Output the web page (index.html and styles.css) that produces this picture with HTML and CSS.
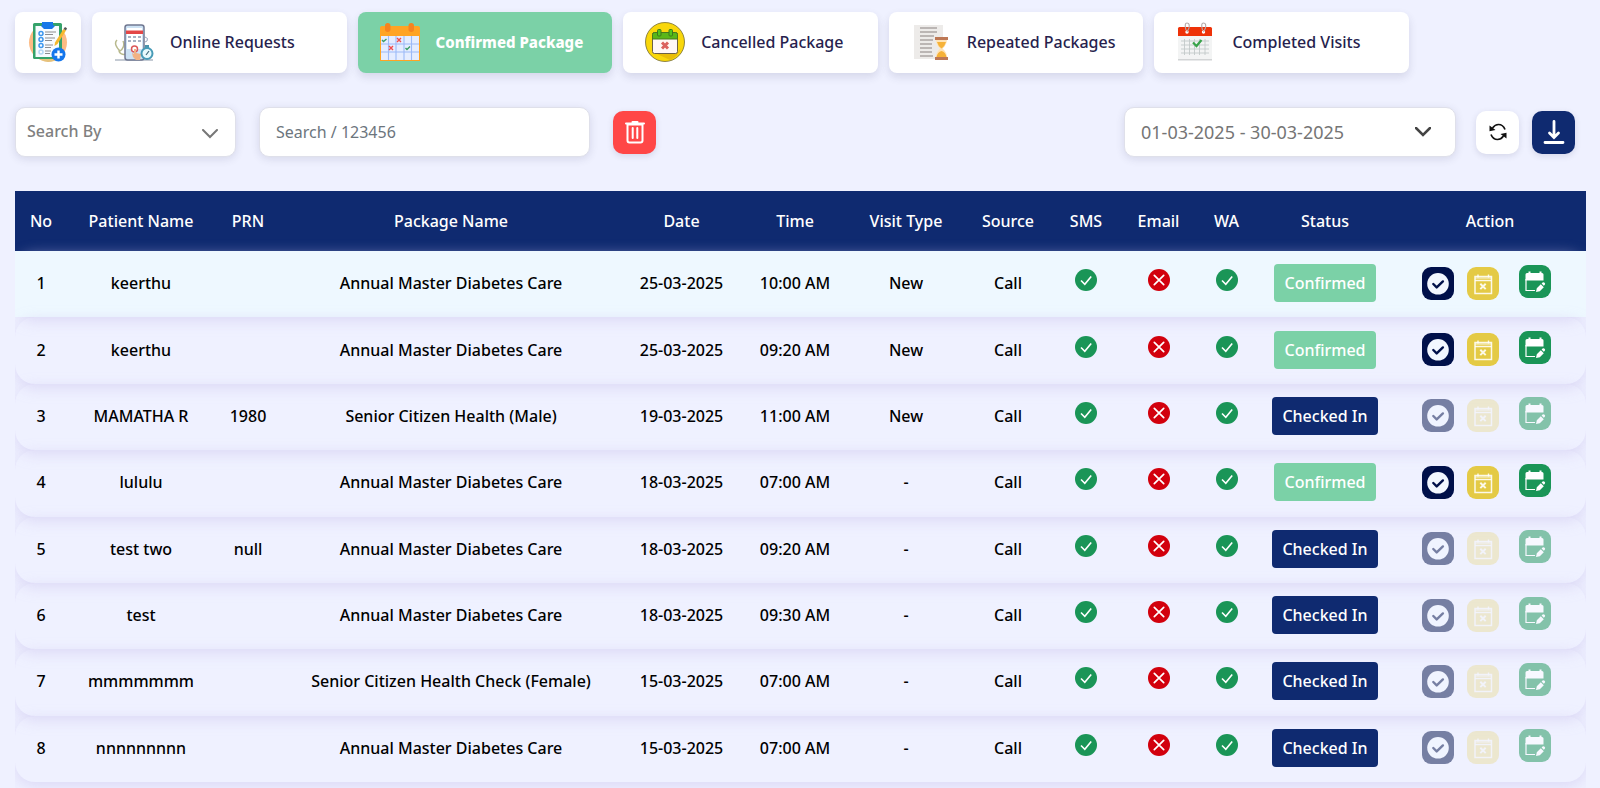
FILE: index.html
```html
<!DOCTYPE html>
<html lang="en">
<head>
<meta charset="utf-8">
<title>Confirmed Package</title>
<link rel="stylesheet" href="styles.css">
</head>
<body>
<svg class="sprite" aria-hidden="true">
  <symbol id="ok" viewBox="0 0 22 22"><circle cx="11" cy="11" r="11" fill="#1a9557"/><path d="M6 11.5l3.8 3.8 6.4-7.8" fill="none" stroke="#fff" stroke-width="1.6"/></symbol>
  <symbol id="no" viewBox="0 0 22 22"><circle cx="11" cy="11" r="11" fill="#d2000d"/><path d="M6.3 6.3l9.4 9.4M15.7 6.3l-9.4 9.4" fill="none" stroke="#fff" stroke-width="1.7" stroke-linecap="round"/></symbol>
  <symbol id="check" viewBox="0 0 32 33"><circle cx="16" cy="16.800" r="10.800" fill="#f2f7ff"/><path d="M11.300 17l3.400 3.400 6.200-6" fill="none" stroke="#00104a" stroke-width="2.400" stroke-linecap="round" stroke-linejoin="round"/></symbol>
  <symbol id="cancel" viewBox="0 0 32 33"><g fill="none" stroke="#fff" stroke-opacity=".88"><path d="M8 9.500h16.500v17H8z" stroke-width="1.500"/><path d="M8 11h16.500" stroke-width="2" stroke-opacity=".45"/><path d="M8 13.500h16.500M11 7.500v3M21.500 7.500v3" stroke-width="1.400"/><path d="M13.300 16.700l5.400 5.400M18.700 16.700l-5.400 5.400" stroke-width="2"/></g></symbol>
  <symbol id="edit" viewBox="0 0 32 33"><path d="M6.500 9.500q0-1.500 1.500-1.500h1.500V6.500h2V8h9V6.500h2V8H23q1.500 0 1.500 1.500v6h-18z" fill="#fff"/><path d="M7 14v11.500h9" fill="none" stroke="#fff" stroke-width="1.200"/><path d="M17 27l.8-3.800 4-4 3 3-4 4zM22.600 18.500l1-1q1-.7 2 .2 1 1 .2 2l-1 1z" fill="#fff"/></symbol>
</svg>
<main class="page">
  <nav class="tabs" aria-label="Package lists">
    <button class="tab tab-icon" type="button" aria-label="New request">
      <svg class="tab-art" viewBox="0 0 40 40"><circle cx="20" cy="20.500" r="19" fill="#fdbb84"/><path d="M7 33h22l4 2q-6 5-13 5T7 33z" fill="#e6c27c"/><rect x="5" y="1" width="29" height="36" rx="1.500" fill="#35a26a"/><path d="M7.500 4h23.500v31H7.500z" fill="#f7fbff"/><path d="M14 0h11v3l2 1-3 3h-8l-3-3 1-1z" fill="#1877e8"/><g fill="none" stroke="#3d97ee" stroke-width="1.500"><circle cx="13" cy="11.500" r="2"/><circle cx="13" cy="17.500" r="2"/><circle cx="13" cy="23.500" r="2"/><circle cx="13" cy="30" r="2" stroke="#b5d7f5"/></g><path d="M17 10h11M17 12.500h8M17 16h10M17 18.500h7M17 23h8M17 25.500h6M17 29h6M17 31.500h5" stroke="#8d8d90" stroke-width="1.100"/><path d="M27 20.500L35.500 7l2.500 1.500-8.500 13.500-3 2z" fill="#f5b92d"/><path d="M35.500 7l1.500-2 2 1.300-1 2.200z" fill="#555"/><circle cx="30.500" cy="32.500" r="7" fill="#1476ec"/><path d="M30.500 28.500v8M26.500 32.500h8" stroke="#fff" stroke-width="2.400"/></svg>
    </button>
    <button class="tab" type="button">
      <svg class="tab-art" viewBox="0 0 40 40"><path d="M1 38h38" stroke="#8996a7" stroke-width="1"/><path d="M3 18c-3 3-1 7 3 11 3-2 5-6 3-10M5 28c0 4 4 5 7 4" fill="none" stroke="#b8b98d" stroke-width="1.500"/><rect x="11" y="3" width="19" height="35" rx="2.500" fill="#cde2f4" stroke="#707891" stroke-width="1.500"/><path d="M13 6h15v21H13z" fill="#fff"/><path d="M12 8.500h17V12H12z" fill="#e34747"/><path d="M14 15h3M19 15h3M24 15h3M14 19h3M19 19h3M24 19h3" stroke="#a6b2c3" stroke-width="2"/><path d="M31 15q4 1 2 4l-2 1" fill="none" stroke="#99a7bd"/><circle cx="20.500" cy="27" r="3" fill="#fff" stroke="#db5858" stroke-width="1.500"/><path d="M20 27v5l-2-1 1 4 3 3h4l1-6-5-1v-4z" fill="#f1b283"/><path d="M31 23h4v3h-4z" fill="#4a93ab"/><circle cx="33" cy="31.500" r="5.500" fill="#e9fafd" stroke="#489bb7" stroke-width="2"/><path d="M32 33l3-4" stroke="#426b7c" stroke-width="1.200"/></svg>
      <span>Online Requests</span>
    </button>
    <button class="tab tab-active" type="button" aria-current="page">
      <svg class="tab-art" viewBox="0 0 40 40"><path d="M0 6q0-2 2-2h36q2 0 2 2v33H0z" fill="#ffa424"/><path d="M1 14h38v24H1z" fill="#e5edff"/><path d="M8.500 14v24M16 14v24M24 14v24M31.500 14v24M1 22h38M1 30h38" stroke="#9cbaf8" stroke-width="1.100"/><rect x="5" y="1" width="5.500" height="9" rx="2.700" fill="#f6841f"/><rect x="28.500" y="1" width="5.500" height="9" rx="2.700" fill="#f6841f"/><path d="M2 18l1.500 1.500L6.500 17M25.500 26l1.500 1.500 3-3" fill="none" stroke="#399c65" stroke-width="1.400"/><path d="M17 16l4 4M21 16l-4 4M9 24l4 4M13 24l-4 4" stroke="#f04d4d" stroke-width="1.400"/></svg>
      <span>Confirmed Package</span>
    </button>
    <button class="tab" type="button">
      <svg class="tab-art" viewBox="0 0 40 40"><circle cx="20" cy="20" r="19.500" fill="#f9d70b" stroke="#736b30" stroke-width=".8"/><path d="M10 31h22l4-5q-3 9-11 12z" fill="#e9bd08"/><rect x="7.500" y="10.500" width="25" height="21" rx="2" fill="#fff7f5" stroke="#6d6145"/><path d="M7.500 17v-4.500q0-2 2-2h21q2 0 2 2V17z" fill="#5ab719" stroke="#48791a"/><rect x="12.500" y="7.500" width="3.500" height="6.500" rx="1" fill="#55c51b" stroke="#3e781d"/><rect x="24" y="7.500" width="3.500" height="6.500" rx="1" fill="#55c51b" stroke="#3e781d"/><path d="M17 20.500l6 6M23 20.500l-6 6" stroke="#db625f" stroke-width="3"/></svg>
      <span>Cancelled Package</span>
    </button>
    <button class="tab" type="button">
      <svg class="tab-art" viewBox="0 0 40 40"><path d="M3 3h29v34H3z" fill="#edebe9"/><path d="M9 6h17M9 10h17M9 14h14M9 18h13M9 22h12M9 26h12M9 30h12M9 34h13" stroke="#aaa5a2" stroke-width="1.600"/><path d="M25 17h11q0 6-4.500 9.500Q36 30 36 36H25q0-6 4-9.500-4-3.500-4-9.500z" fill="#ffe3b5"/><path d="M26 20h9q-1 4-4.500 6.500Q27 24 26 20zM25.500 35q1-5 5-6 4 1 5 6z" fill="#f6b238"/><path d="M24 15h13v3H24zM24 35h13v3H24z" fill="#bd7855"/></svg>
      <span>Repeated Packages</span>
    </button>
    <button class="tab" type="button">
      <svg class="tab-art" viewBox="0 0 40 40"><path d="M2 12h34v26H2z" fill="#f3f4f4"/><path d="M2 37h34v1.500H2z" fill="#d2d4d5"/><path d="M3.500 5h31q1.500 0 1.500 1.500V14H2V6.500Q2 5 3.500 5z" fill="#ee3208"/><path d="M5 19h28M5 23h28M5 27h28M5 31h28M8.500 17v16M13.500 17v16M18.500 17v16M23.500 17v16M29 17v16" stroke="#c3c9ca" stroke-width=".9"/><circle cx="11" cy="10" r="1.700" fill="#fff"/><circle cx="27.500" cy="10" r="1.700" fill="#fff"/><path d="M10 8Q8 1 11 1t2 5l-2 4M26.500 8q-2-7 1-7t2 5l-2 4" fill="none" stroke="#b2a7a7" stroke-width="1.100"/><path d="M17 20.500l3.500 3.500 5-6" fill="none" stroke="#38a34a" stroke-width="2.200"/></svg>
      <span>Completed Visits</span>
    </button>
  </nav>

  <form class="toolbar">
    <div class="field field-by">
      <select class="control control-by" aria-label="Search by"><option>Search By</option><option>Patient Name</option><option>PRN</option></select>
      <svg class="chevron chevron-by" viewBox="0 0 16 10"><path d="M1 1l7 7 7-7"/></svg>
    </div>
    <input class="control control-search" type="text" placeholder="Search / 123456" aria-label="Search">
    <button class="tool tool-delete" type="button" aria-label="Clear search"><svg class="tool-art" viewBox="0 0 24 24"><path d="M4.500 4.500h15v16q0 2-2 2h-11q-2 0-2-2zM3 3.500h18M9.500 2h5M9.700 8v10M14.300 8v10" fill="none" stroke="#fff" stroke-width="2" stroke-linecap="round"/></svg></button>
    <div class="field field-date">
      <input class="control control-date" type="text" readonly value="01-03-2025 - 30-03-2025" aria-label="Date range">
      <svg class="chevron chevron-date" viewBox="0 0 16 10"><path d="M1 1l7 7 7-7"/></svg>
    </div>
    <button class="tool tool-refresh" type="button" aria-label="Refresh"><svg class="refresh-art" viewBox="0 0 18 18"><path d="M3.500 5Q6 1.500 9.500 1.500q4.500 0 6.500 5M14.500 13Q12 16.500 8.500 16.500 4 16.500 2 11.500" fill="none" stroke="#111" stroke-width="1.700"/><path d="M.5 2.500v5.700L6.500 7zM17.500 15.500V9.800L11.500 11z" fill="#111"/></svg></button>
    <button class="tool tool-download" type="button" aria-label="Download"><svg class="tool-art" viewBox="0 0 24 24"><path d="M12 1.500V17M7.500 13L12 17.500l4.500-4.500M3 22.500h18" fill="none" stroke="#fff" stroke-width="2.800" stroke-linecap="round"/></svg></button>
  </form>

  <div class="table-wrap">
    <table class="visits">
      <colgroup><col class="c-no"><col class="c-name"><col class="c-prn"><col class="c-package"><col class="c-date"><col class="c-time"><col class="c-type"><col class="c-source"><col class="c-sms"><col class="c-email"><col class="c-wa"><col class="c-status"><col class="c-action"></colgroup>
      <thead><tr><th>No</th><th>Patient Name</th><th>PRN</th><th>Package Name</th><th>Date</th><th>Time</th><th>Visit Type</th><th>Source</th><th>SMS</th><th>Email</th><th>WA</th><th>Status</th><th>Action</th></tr></thead>
      <tbody>
        <tr class="row-hover"><td>1</td><td>keerthu</td><td></td><td>Annual Master Diabetes Care</td><td>25-03-2025</td><td>10:00 AM</td><td>New</td><td>Call</td>
          <td><svg class="mark"><use href="#ok"/></svg></td><td><svg class="mark"><use href="#no"/></svg></td><td><svg class="mark"><use href="#ok"/></svg></td><td><span class="badge badge-confirmed">Confirmed</span></td>
          <td><div class="actions"><button class="act act-check" type="button" aria-label="Check in"><svg><use href="#check"/></svg></button><button class="act act-cancel" type="button" aria-label="Cancel"><svg><use href="#cancel"/></svg></button><button class="act act-edit" type="button" aria-label="Reschedule"><svg><use href="#edit"/></svg></button></div></td></tr>
        <tr><td>2</td><td>keerthu</td><td></td><td>Annual Master Diabetes Care</td><td>25-03-2025</td><td>09:20 AM</td><td>New</td><td>Call</td>
          <td><svg class="mark"><use href="#ok"/></svg></td><td><svg class="mark"><use href="#no"/></svg></td><td><svg class="mark"><use href="#ok"/></svg></td><td><span class="badge badge-confirmed">Confirmed</span></td>
          <td><div class="actions"><button class="act act-check" type="button" aria-label="Check in"><svg><use href="#check"/></svg></button><button class="act act-cancel" type="button" aria-label="Cancel"><svg><use href="#cancel"/></svg></button><button class="act act-edit" type="button" aria-label="Reschedule"><svg><use href="#edit"/></svg></button></div></td></tr>
        <tr><td>3</td><td>MAMATHA R</td><td>1980</td><td>Senior Citizen Health (Male)</td><td>19-03-2025</td><td>11:00 AM</td><td>New</td><td>Call</td>
          <td><svg class="mark"><use href="#ok"/></svg></td><td><svg class="mark"><use href="#no"/></svg></td><td><svg class="mark"><use href="#ok"/></svg></td><td><span class="badge badge-checked">Checked In</span></td>
          <td><div class="actions"><button class="act act-check" type="button" disabled aria-label="Check in"><svg><use href="#check"/></svg></button><button class="act act-cancel" type="button" disabled aria-label="Cancel"><svg><use href="#cancel"/></svg></button><button class="act act-edit" type="button" disabled aria-label="Reschedule"><svg><use href="#edit"/></svg></button></div></td></tr>
        <tr><td>4</td><td>lululu</td><td></td><td>Annual Master Diabetes Care</td><td>18-03-2025</td><td>07:00 AM</td><td>-</td><td>Call</td>
          <td><svg class="mark"><use href="#ok"/></svg></td><td><svg class="mark"><use href="#no"/></svg></td><td><svg class="mark"><use href="#ok"/></svg></td><td><span class="badge badge-confirmed">Confirmed</span></td>
          <td><div class="actions"><button class="act act-check" type="button" aria-label="Check in"><svg><use href="#check"/></svg></button><button class="act act-cancel" type="button" aria-label="Cancel"><svg><use href="#cancel"/></svg></button><button class="act act-edit" type="button" aria-label="Reschedule"><svg><use href="#edit"/></svg></button></div></td></tr>
        <tr><td>5</td><td>test two</td><td>null</td><td>Annual Master Diabetes Care</td><td>18-03-2025</td><td>09:20 AM</td><td>-</td><td>Call</td>
          <td><svg class="mark"><use href="#ok"/></svg></td><td><svg class="mark"><use href="#no"/></svg></td><td><svg class="mark"><use href="#ok"/></svg></td><td><span class="badge badge-checked">Checked In</span></td>
          <td><div class="actions"><button class="act act-check" type="button" disabled aria-label="Check in"><svg><use href="#check"/></svg></button><button class="act act-cancel" type="button" disabled aria-label="Cancel"><svg><use href="#cancel"/></svg></button><button class="act act-edit" type="button" disabled aria-label="Reschedule"><svg><use href="#edit"/></svg></button></div></td></tr>
        <tr><td>6</td><td>test</td><td></td><td>Annual Master Diabetes Care</td><td>18-03-2025</td><td>09:30 AM</td><td>-</td><td>Call</td>
          <td><svg class="mark"><use href="#ok"/></svg></td><td><svg class="mark"><use href="#no"/></svg></td><td><svg class="mark"><use href="#ok"/></svg></td><td><span class="badge badge-checked">Checked In</span></td>
          <td><div class="actions"><button class="act act-check" type="button" disabled aria-label="Check in"><svg><use href="#check"/></svg></button><button class="act act-cancel" type="button" disabled aria-label="Cancel"><svg><use href="#cancel"/></svg></button><button class="act act-edit" type="button" disabled aria-label="Reschedule"><svg><use href="#edit"/></svg></button></div></td></tr>
        <tr><td>7</td><td>mmmmmmm</td><td></td><td>Senior Citizen Health Check (Female)</td><td>15-03-2025</td><td>07:00 AM</td><td>-</td><td>Call</td>
          <td><svg class="mark"><use href="#ok"/></svg></td><td><svg class="mark"><use href="#no"/></svg></td><td><svg class="mark"><use href="#ok"/></svg></td><td><span class="badge badge-checked">Checked In</span></td>
          <td><div class="actions"><button class="act act-check" type="button" disabled aria-label="Check in"><svg><use href="#check"/></svg></button><button class="act act-cancel" type="button" disabled aria-label="Cancel"><svg><use href="#cancel"/></svg></button><button class="act act-edit" type="button" disabled aria-label="Reschedule"><svg><use href="#edit"/></svg></button></div></td></tr>
        <tr><td>8</td><td>nnnnnnnnn</td><td></td><td>Annual Master Diabetes Care</td><td>15-03-2025</td><td>07:00 AM</td><td>-</td><td>Call</td>
          <td><svg class="mark"><use href="#ok"/></svg></td><td><svg class="mark"><use href="#no"/></svg></td><td><svg class="mark"><use href="#ok"/></svg></td><td><span class="badge badge-checked">Checked In</span></td>
          <td><div class="actions"><button class="act act-check" type="button" disabled aria-label="Check in"><svg><use href="#check"/></svg></button><button class="act act-cancel" type="button" disabled aria-label="Cancel"><svg><use href="#cancel"/></svg></button><button class="act act-edit" type="button" disabled aria-label="Reschedule"><svg><use href="#edit"/></svg></button></div></td></tr>
      </tbody>
    </table>
  </div>
</main>
</body>
</html>
```

FILE: styles.css
```css
* { box-sizing: border-box; }

body {
  margin: 0;
  background: #eff1ff;
  color: #000;
  font: 500 16px/24px "Noto Sans", sans-serif;
}

button, input, select { font: inherit; }
button { padding: 0; border: 0; }
.sprite { display: none; }

.page { padding: 12px 14px 0 15px; }

/* Tabs */
.tabs {
  display: grid;
  grid-template-columns: 66px repeat(5, 1fr);
  gap: 11px;
  max-width: 1394px;
}

.tab {
  display: flex;
  align-items: center;
  gap: 16px;
  height: 61px;
  padding: 0 0 2px 22px;
  border-radius: 8px;
  background: #fff;
  box-shadow: 0 4px 8px rgba(60, 60, 100, .14);
  color: #271f4e;
  white-space: nowrap;
}

.tab-icon { justify-content: center; padding-left: 0; }
.tab-active { background: #7bd1a7; color: #fff; font-size: 15px; font-weight: 800; }
.tab-art { flex: none; width: 40px; height: 40px; }

/* Search and date tools */
.toolbar {
  display: flex;
  align-items: center;
  gap: 23px;
  margin: 34px 11px 34px 0;
}

.field { position: relative; }
.field-by { flex: 0 1 221px; }
.field-date { flex: 0 1 332px; margin-left: auto; }

.control {
  display: block;
  width: 100%;
  height: 50px;
  padding: 0 16px;
  border: 1px solid #dfe0ea;
  border-radius: 10px;
  background: #fff;
  box-shadow: 0 2px 8px rgba(60, 60, 100, .14);
  color: #757575;
  font-weight: 400;
  appearance: none;
}

.control-by { padding: 0 11px 3px; color: #808080; font-weight: 500; }
.control-search { flex: 0 1 331px; }
.control-search::placeholder { color: #6c757d; opacity: 1; }
.control-date { font-size: 18px; }

.chevron {
  position: absolute;
  top: 50%;
  width: 16px;
  height: 10px;
  fill: none;
  stroke-width: 2;
  stroke-linecap: round;
  pointer-events: none;
}

.chevron-by { right: 18px; margin-top: -3px; stroke: #777; }
.chevron-date { right: 25px; margin-top: -5px; stroke: #444; stroke-width: 2.5; }

.tool {
  display: grid;
  flex: none;
  place-items: center;
  width: 43px;
  height: 43px;
  border-radius: 10px;
  box-shadow: 0 2px 6px rgba(60, 60, 100, .14);
}

.tool-delete { background: #ff4747; }
.tool-refresh { margin-left: -3px; background: #fff; }
.tool-download { margin-left: -10px; background: #0f2a70; }
.tool-art { width: 24px; height: 24px; }
.refresh-art { width: 18px; height: 18px; }

/* Visits table */
.table-wrap { padding-bottom: 8px; overflow: hidden; }

.visits {
  width: 100%;
  height: 591px;
  border-collapse: collapse;
  table-layout: fixed;
  text-align: center;
}

.c-no { width: 52px; }
.c-name { width: 148px; }
.c-prn { width: 66px; }
.c-package { width: 340px; }
.c-date { width: 121px; }
.c-time { width: 106px; }
.c-type { width: 116px; }
.c-source { width: 88px; }
.c-sms { width: 68px; }
.c-email { width: 77px; }
.c-wa { width: 59px; }
.c-status { width: 138px; }
.c-action { width: 192px; }

.visits th {
  height: 60px;
  padding: 0;
  background: #0f2a70;
  color: #fff;
  font-weight: 500;
}

.visits td { height: 66px; padding: 0 0 2px; white-space: nowrap; }
.visits tbody tr { border-radius: 20px; box-shadow: 0 4px 14px rgba(208, 201, 240, .6); }
.row-hover td { background: #eef8ff; }

.mark { display: block; width: 22px; height: 22px; margin: 0 auto 6px; }

.badge {
  display: inline-block;
  padding: 7px 10px;
  border-radius: 4px;
  color: #fff;
}

.badge-confirmed { background: #7bd1a7; }
.badge-checked { background: #0f2a70; }

.actions { display: flex; padding-left: 28px; }
.act { width: 32px; height: 33px; border-radius: 9px; }
.act svg { display: block; width: 32px; height: 33px; }
.act-check { background: #00104a; }
.act-cancel { margin-left: 13px; background: #e4ca45; }
.act-edit { margin: -2px 0 2px 20px; background: #1a9557; }
.act:disabled { opacity: .5; }
.act-cancel:disabled { opacity: .25; }
```
